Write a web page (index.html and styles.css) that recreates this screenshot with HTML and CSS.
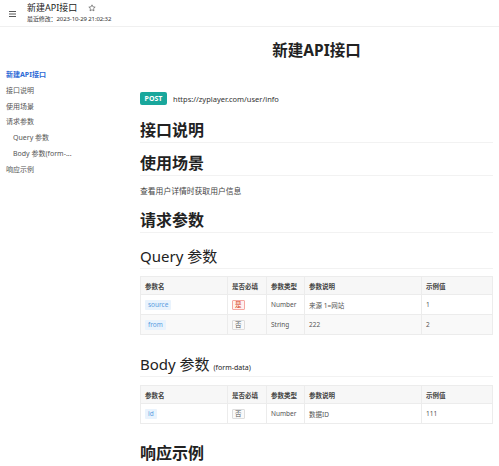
FILE: index.html
```html
<!DOCTYPE html>
<html>
<head>
  <meta charset="UTF-8">
  <title>新建API接口</title>
  <link rel="stylesheet" href="styles.css">
</head>
<body>
  <div class="header">
    <span class="menu-icon">
      <svg width="7" height="6" viewBox="0 0 7 6"><path d="M0 0.5H7M0 3H7M0 5.5H7" stroke="#444" stroke-width="0.9"/></svg>
    </span>
    <div class="header-info">
      <div class="header-title">新建API接口
        <svg class="star" width="8" height="8" viewBox="0 0 24 24"><path d="M12 2.5l2.9 6.1 6.6.8-4.9 4.6 1.3 6.6L12 17.3l-5.9 3.3 1.3-6.6-4.9-4.6 6.6-.8z" fill="none" stroke="#555" stroke-width="2" stroke-linejoin="round"/></svg>
      </div>
      <div class="header-time">最近修改：2023-10-29 21:02:32</div>
    </div>
  </div>

  <div class="layout">
    <div class="sidebar">
      <div class="nav-item active">新建API接口</div>
      <div class="nav-item">接口说明</div>
      <div class="nav-item">使用场景</div>
      <div class="nav-item">请求参数</div>
      <div class="nav-item sub">Query 参数</div>
      <div class="nav-item sub">Body 参数(form-...</div>
      <div class="nav-item">响应示例</div>
    </div>

    <div class="main">
      <h1>新建API接口</h1>
      <div class="url-row">
        <span class="method">POST</span>
        <span class="url">https://zyplayer.com/user/info</span>
      </div>

      <h2>接口说明</h2>
      <h2>使用场景</h2>
      <p class="desc">查看用户详情时获取用户信息</p>
      <h2>请求参数</h2>

      <h3>Query 参数</h3>
      <table class="params">
        <tr>
          <th class="c-name">参数名</th>
          <th class="c-req">是否必填</th>
          <th class="c-type">参数类型</th>
          <th class="c-desc">参数说明</th>
          <th>示例值</th>
        </tr>
        <tr>
          <td><span class="tag-name">source</span></td>
          <td><span class="tag-yes">是</span></td>
          <td>Number</td>
          <td>来源 1=网站</td>
          <td>1</td>
        </tr>
        <tr class="alt">
          <td><span class="tag-name">from</span></td>
          <td><span class="tag-no">否</span></td>
          <td>String</td>
          <td>222</td>
          <td>2</td>
        </tr>
      </table>

      <h3 class="body-title">Body 参数 <small>(form-data)</small></h3>
      <table class="params">
        <tr>
          <th class="c-name">参数名</th>
          <th class="c-req">是否必填</th>
          <th class="c-type">参数类型</th>
          <th class="c-desc">参数说明</th>
          <th>示例值</th>
        </tr>
        <tr>
          <td><span class="tag-name">id</span></td>
          <td><span class="tag-no">否</span></td>
          <td>Number</td>
          <td>数据ID</td>
          <td>111</td>
        </tr>
      </table>

      <h2 class="last">响应示例</h2>
    </div>
  </div>
</body>
</html>
```

FILE: styles.css
```css
body {
  margin: 0;
  background-color: #ffffff;
  color: #333333;
  font-family: "Noto Sans", "Noto Sans CJK SC", sans-serif;
  overflow: hidden;
}

.header {
  height: 26px;
  display: flex;
  align-items: center;
  border-bottom: 1px solid #f0f0f0;
}

.menu-icon {
  width: 27px;
  display: flex;
  padding-left: 9px;
  box-sizing: border-box;
  margin-top: 1px;
}

.header-title {
  font-size: 9px;
  line-height: 12px;
  color: #222222;
  display: flex;
  align-items: center;
}

.star {
  margin-left: 11px;
  margin-top: -1px;
}

.header-time {
  font-size: 6px;
  line-height: 10px;
  letter-spacing: -0.1px;
  color: #333333;
}

.layout {
  display: flex;
}

.sidebar {
  width: 140px;
  flex-shrink: 0;
  padding-top: 40px;
  box-sizing: border-box;
}

.nav-item {
  font-size: 7px;
  line-height: 15.8px;
  padding-left: 6px;
  color: #555555;
  white-space: nowrap;
}

.nav-item.active {
  color: #2f6bd6;
  font-weight: bold;
}

.nav-item.sub {
  padding-left: 13px;
}

.main {
  flex: 1;
  padding: 12px 6px 0 0;
}

h1 {
  margin: 0;
  font-size: 15.5px;
  line-height: 22px;
  text-align: center;
  color: #222222;
}

.url-row {
  margin-top: 31px;
  display: flex;
  align-items: center;
  height: 13px;
}

.method {
  background-color: #19a79c;
  color: #ffffff;
  font-size: 7px;
  font-weight: bold;
  width: 27px;
  height: 13px;
  line-height: 13px;
  text-align: center;
  border-radius: 2px;
}

.url {
  margin-left: 6px;
  font-size: 7.5px;
  color: #333333;
}

h2 {
  margin: 8.5px 0 0 0;
  font-size: 16px;
  line-height: 22px;
  padding-bottom: 1.5px;
  border-bottom: 1px solid #f2f2f2;
  color: #222222;
}

h2:first-of-type {
  margin-top: 13.5px;
}

.desc {
  margin: 9px 0 0 0;
  font-size: 7.8px;
  line-height: 12px;
  color: #444444;
}

.desc + h2 {
  margin-top: 11.5px;
}

h3 {
  margin: 13px 0 0 0;
  font-size: 15px;
  font-weight: normal;
  line-height: 20px;
  padding-bottom: 2px;
  border-bottom: 1px solid #f2f2f2;
  color: #222222;
}

h3 small {
  font-size: 7px;
  line-height: 1;
}

h3.body-title {
  margin-top: 19px;
}

.params {
  width: 100%;
  margin-top: 7px;
  border-collapse: collapse;
  font-size: 6.5px;
  color: #555555;
}

.body-title + .params {
  margin-top: 8px;
}

.params th,
.params td {
  border: 1px solid #ececec;
  padding: 0 4px;
  text-align: left;
}

.params th {
  height: 17px;
  background-color: #f7f7f7;
  font-weight: 600;
  color: #444444;
}

.params td {
  height: 19px;
}

.params tr.alt td {
  background-color: #f9f9f9;
}

.c-name { width: 78px; }
.c-req { width: 30px; }
.c-type { width: 29px; }
.c-desc { width: 108px; }

.tag-name {
  display: inline-block;
  padding: 0 3px;
  line-height: 10px;
  background-color: #e9f3fd;
  color: #5a9de0;
  border-radius: 1px;
}

.tag-yes,
.tag-no {
  display: inline-block;
  padding: 0 2px;
  line-height: 8px;
  border-radius: 1px;
}

.tag-yes {
  background-color: #fff1f0;
  border: 1px solid #f5a8a2;
  color: #d4380d;
}

.tag-no {
  background-color: #fafafa;
  border: 1px solid #dddddd;
  color: #555555;
}

h2.last {
  margin-top: 18px;
}
```
